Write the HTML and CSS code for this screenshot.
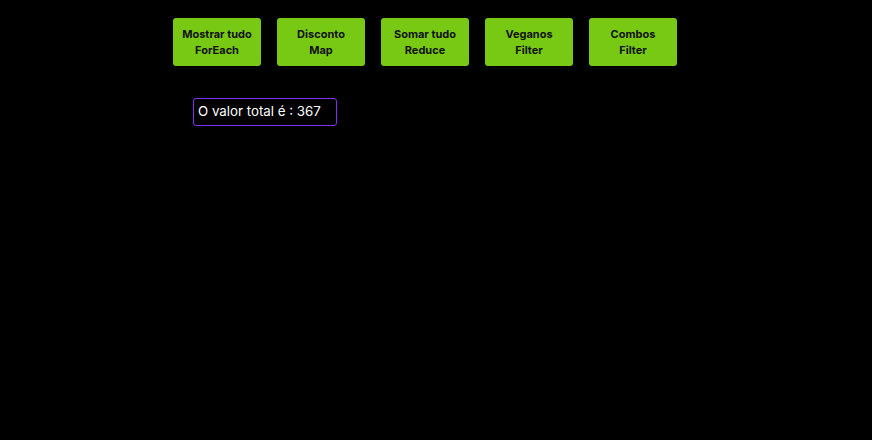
FILE: index.html
```html
<!DOCTYPE html>
<html>
<head>
<meta charset="utf-8">
<link rel="stylesheet" href="styles.css">
</head>
<body>
<div class="buttons">
  <button class="btn">Mostrar tudo<br>ForEach</button>
  <button class="btn">Disconto<br>Map</button>
  <button class="btn">Somar tudo<br>Reduce</button>
  <button class="btn">Veganos<br>Filter</button>
  <button class="btn">Combos<br>Filter</button>
</div>
<div class="result">O valor total é : 367</div>
</body>
</html>
```
FILE: styles.css
```css
html, body {
  background: #000;
}
body {
  margin: 8px;
  font-family: "Inter", "Open Sans", sans-serif;
}
.buttons {
  display: flex;
  gap: 16px;
  padding-left: 165px;
  margin-top: 10px;
}
.btn {
  width: 88px;
  height: 48px;
  background: #77c913;
  border: none;
  border-radius: 3px;
  color: #111;
  font-family: "Inter", "Open Sans", sans-serif;
  font-weight: 700;
  font-size: 11px;
  line-height: 16px;
  padding: 0;
  text-align: center;
}
.result {
  margin-top: 32px;
  margin-left: 185px;
  width: 144px;
  height: 28px;
  box-sizing: border-box;
  border: 1px solid #7d34f0;
  border-radius: 3px;
  color: #fff;
  font-size: 13.3px;
  line-height: 25px;
  padding-left: 4px;
  white-space: nowrap;
}
```
